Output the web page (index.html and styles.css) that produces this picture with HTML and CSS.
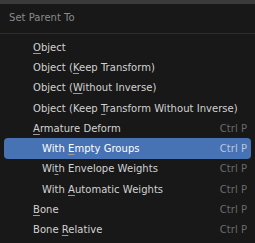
FILE: index.html
```html
<!DOCTYPE html>
<html lang="en">
<head>
  <meta charset="UTF-8">
  <title>Set Parent To</title>
  <link rel="stylesheet" href="styles.css">
</head>
<body>
  <div class="menu">
    <div class="titulo">Set Parent To</div>
    <div class="separador"></div>

    <div class="item"><span class="texto"><u>O</u>bject</span></div>
    <div class="item"><span class="texto">Object (<u>K</u>eep Transform)</span></div>
    <div class="item"><span class="texto">Object (<u>W</u>ithout Inverse)</span></div>
    <div class="item"><span class="texto">Object (Keep <u>T</u>ransform Without Inverse)</span></div>
    <div class="item"><span class="texto"><u>A</u>rmature Deform</span><span class="atajo">Ctrl P</span></div>
    <div class="item sub activo"><span class="texto">With <u>E</u>mpty Groups</span><span class="atajo">Ctrl P</span></div>
    <div class="item sub"><span class="texto">Wi<u>t</u>h Envelope Weights</span><span class="atajo">Ctrl P</span></div>
    <div class="item sub"><span class="texto">With <u>A</u>utomatic Weights</span><span class="atajo">Ctrl P</span></div>
    <div class="item"><span class="texto"><u>B</u>one</span><span class="atajo">Ctrl P</span></div>
    <div class="item"><span class="texto">Bone <u>R</u>elative</span><span class="atajo">Ctrl P</span></div>
  </div>
</body>
</html>
```

FILE: styles.css
```css
body {
  margin: 0;
  background-color: #3a3a3a;
  font-family: 'DejaVu Sans', sans-serif;
  font-size: 10px;
  letter-spacing: 0.03px;
}

.menu {
  margin-top: 4px;
  height: 239px;
  background-color: #181818;
  padding: 0 4px;
}

.titulo {
  height: 29px;
  line-height: 28px;
  padding-left: 5px;
  color: #8a8a8a;
}

.separador {
  height: 1px;
  background-color: #2e2e2e;
  margin: 0 -4px 3px;
}

.item {
  display: flex;
  justify-content: space-between;
  align-items: center;
  height: 20.3px;
  padding: 0 4px 0 29px;
  color: #d2d2d2;
  border-radius: 4px;
  white-space: nowrap;
}

.item.sub {
  padding-left: 38px;
}

.item.activo {
  background-color: #4772b3;
  color: #ffffff;
}

.atajo {
  color: #6b6b6b;
}

.item.activo .atajo {
  color: #b8c8e0;
}

u {
  text-decoration-color: #9a9a9a;
  text-underline-offset: 2px;
}
```
